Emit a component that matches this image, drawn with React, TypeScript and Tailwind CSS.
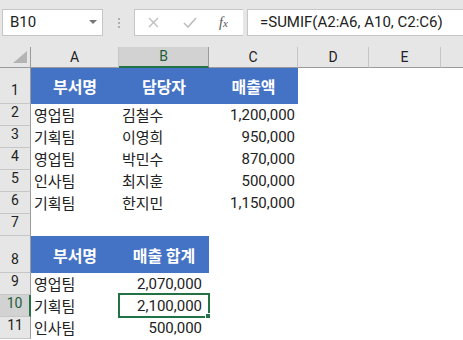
import React from 'react';

// column widths: row header, A..E, rest
const COLS = [31, 88, 90, 89, 71, 72];
const LETTERS = ['A', 'B', 'C', 'D', 'E'];

type Row = {
  n: number;
  h: number;
  header?: boolean;
  cells: string[];
};

const ROWS: Row[] = [
  { n: 1, h: 36, header: true, cells: ['부서명', '담당자', '매출액'] },
  { n: 2, h: 22, cells: ['영업팀', '김철수', '1,200,000'] },
  { n: 3, h: 22, cells: ['기획팀', '이영희', '950,000'] },
  { n: 4, h: 22, cells: ['영업팀', '박민수', '870,000'] },
  { n: 5, h: 22, cells: ['인사팀', '최지훈', '500,000'] },
  { n: 6, h: 22, cells: ['기획팀', '한지민', '1,150,000'] },
  { n: 7, h: 22, cells: [] },
  { n: 8, h: 37, header: true, cells: ['부서명', '매출 합계'] },
  { n: 9, h: 22, cells: ['영업팀', '2,070,000'] },
  { n: 10, h: 22, cells: ['기획팀', '2,100,000'] },
  { n: 11, h: 22, cells: ['인사팀', '500,000'] },
];

const isNum = (s: string) => /^[\d,]+$/.test(s);

function TopBar() {
  return (
    <div className="h-[47px] bg-[#e6e6e6] relative flex items-start pt-[9px]">
      {/* name box */}
      <div className="ml-[2px] w-[101px] h-[27px] bg-white border border-[#c6c6c6] flex items-center justify-between pl-[7px] pr-[5px]">
        <span className="text-[15px] text-[#222] font-['Roboto']">B10</span>
        <svg width="8" height="5" viewBox="0 0 8 5">
          <polygon points="0,0 8,0 4,4" fill="#777" />
        </svg>
      </div>
      {/* dotted separator */}
      <div className="w-[31px] h-[27px] flex flex-col items-center justify-center gap-[2px]">
        <div className="w-[2px] h-[2px] bg-[#b0b0b0]" />
        <div className="w-[2px] h-[2px] bg-[#b0b0b0]" />
        <div className="w-[2px] h-[2px] bg-[#b0b0b0]" />
      </div>
      {/* formula buttons */}
      <div className="w-[109px] h-[27px] bg-white border border-[#c6c6c6] border-r-0 flex items-center">
        <svg className="ml-[13px]" width="11" height="11" viewBox="0 0 11 11">
          <path d="M1 1 L10 10 M10 1 L1 10" stroke="#bdbdbd" strokeWidth="1.4" />
        </svg>
        <svg className="ml-[24px]" width="14" height="11" viewBox="0 0 14 11">
          <path d="M1 6 L5 10 L13 1" stroke="#bdbdbd" strokeWidth="1.6" fill="none" />
        </svg>
        <span className="ml-[22px] text-[14px] italic text-[#555] font-['Liberation_Serif'] leading-none">
          f<span className="text-[11px]">x</span>
        </span>
      </div>
      <div className="w-[4px] h-[27px]" />
      {/* formula text */}
      <div className="flex-1 h-[27px] bg-white border border-[#c6c6c6] border-r-0 flex items-center pl-[12px]">
        <span className="text-[15px] text-[#222] font-['Roboto'] whitespace-nowrap">=SUMIF(A2:A6, A10, C2:C6)</span>
      </div>
    </div>
  );
}

function ColumnHeader() {
  return (
    <div className="h-[21px] flex bg-[#e6e6e6] font-['Roboto'] text-[14px]">
      <div
        className="h-full border-r border-b border-[#9b9b9b] flex items-end justify-end pr-[3px] pb-[4px]"
        style={{ width: COLS[0] }}
      >
        <svg width="14" height="12" viewBox="0 0 14 12">
          <polygon points="14,0 14,12 0,12" fill="#b4b4b4" />
        </svg>
      </div>
      {LETTERS.map((l, i) => {
        const sel = l === 'B';
        return (
          <div
            key={l}
            className={
              sel
                ? 'h-full bg-[#d2d2d2] border-r border-[#9b9b9b] border-b-2 border-b-[#217346] flex items-center justify-center text-[#1e5f3b]'
                : 'h-full border-r border-[#c6c6c6] border-b border-b-[#9b9b9b] flex items-center justify-center text-[#222]'
            }
            style={{ width: COLS[i + 1] }}
          >
            {l}
          </div>
        );
      })}
      <div className="flex-1 h-full border-b border-[#9b9b9b]" />
    </div>
  );
}

function Cell({ row, col, text }: { row: Row; col: number; text?: string }) {
  const width = COLS[col + 1];
  const blue = row.header && text !== undefined;
  const num = text ? isNum(text) : false;
  const selected = row.n === 10 && col === 1;
  let cls = 'h-full relative flex items-center whitespace-nowrap ';
  if (blue) {
    cls += "bg-[#4472c4] text-white font-bold text-[16px] justify-center font-['Noto_Sans_CJK_KR']";
  } else if (num) {
    cls += "justify-end text-[15px] text-[#222] font-['Roboto'] " + (col === 1 ? 'pr-[7px]' : 'pr-[3px]');
  } else {
    cls += "justify-start pl-[3px] text-[15px] text-[#222] font-['Noto_Sans_CJK_KR']";
  }
  return (
    <div className={cls} style={{ width }}>
      {text}
      {selected && (
        <>
          <div className="absolute -left-[1px] -top-[2px] -right-[1px] -bottom-[1px] border-2 border-[#217346] pointer-events-none" />
          <div className="absolute -right-[2px] -bottom-[2px] w-[6px] h-[6px] bg-[#217346] border border-white" />
        </>
      )}
    </div>
  );
}

function SheetRow({ row }: { row: Row }) {
  const sel = row.n === 10;
  return (
    <div className="flex" style={{ height: row.h }}>
      <div
        className={
          sel
            ? "h-full bg-[#d2d2d2] border-r-2 border-r-[#217346] border-b border-b-[#c6c6c6] flex items-end justify-center pb-[2px] text-[14px] font-['Roboto'] text-[#1e5f3b]"
            : "h-full bg-[#e6e6e6] border-r border-r-[#9b9b9b] border-b border-b-[#c6c6c6] flex items-end justify-center pb-[2px] text-[14px] font-['Roboto'] text-[#222]"
        }
        style={{ width: COLS[0] }}
      >
        {row.n}
      </div>
      {[0, 1, 2, 3, 4].map((c) => (
        <Cell key={c} row={row} col={c} text={row.cells[c]} />
      ))}
      <div className="flex-1 h-full" />
    </div>
  );
}

export default function App() {
  return (
    <div className="w-[463px] h-[340px] overflow-hidden bg-white">
      <TopBar />
      <ColumnHeader />
      {ROWS.map((r) => (
        <SheetRow key={r.n} row={r} />
      ))}
    </div>
  );
}
